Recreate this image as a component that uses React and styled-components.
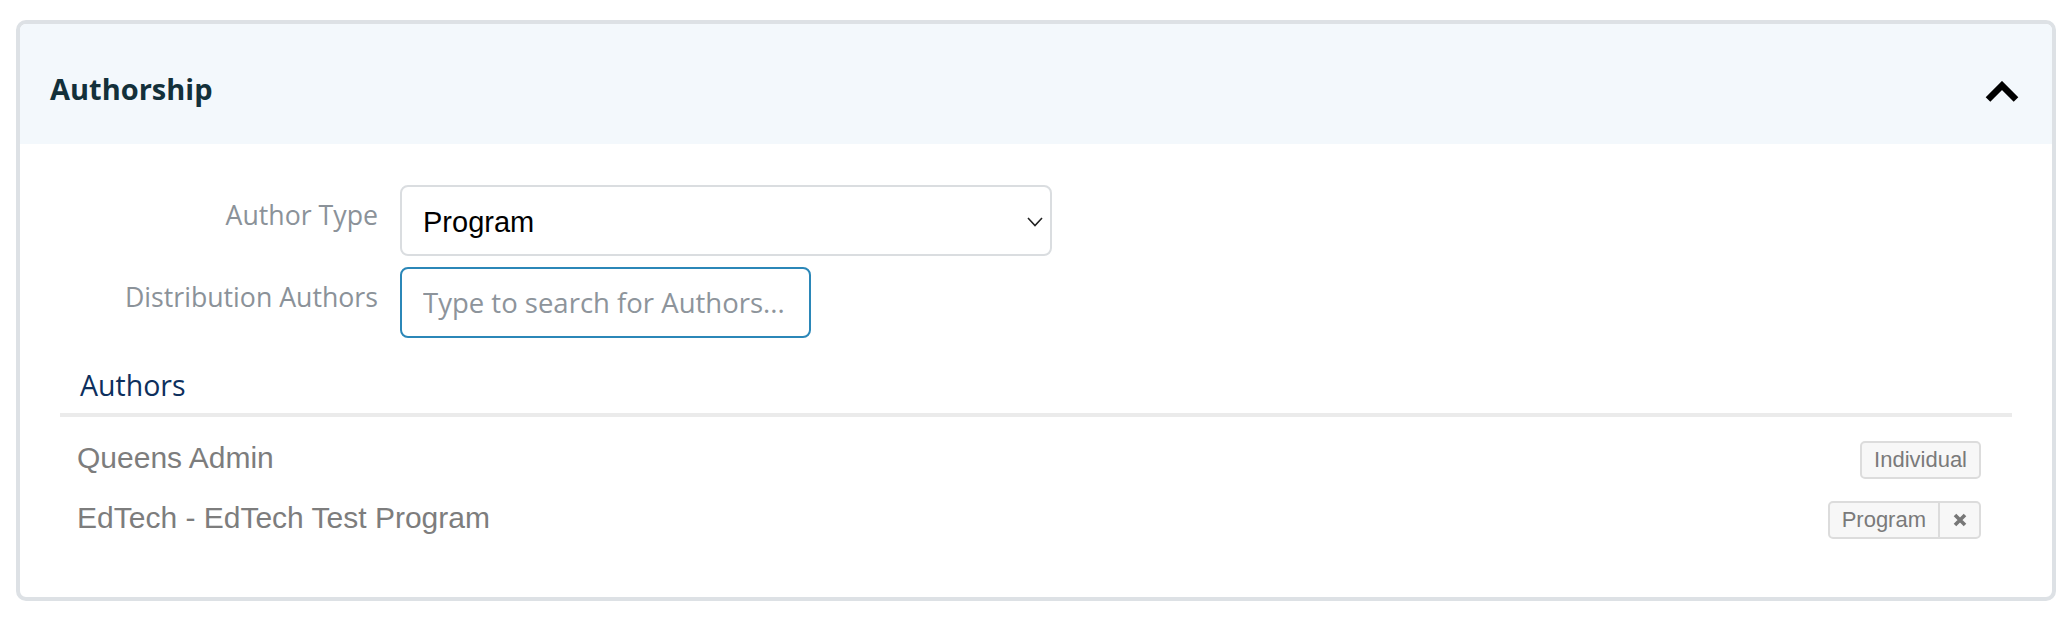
import React from 'react'
import styled, { createGlobalStyle } from 'styled-components'

const GlobalStyle = createGlobalStyle`
  body {
    margin: 0;
    background: #ffffff;
    font-family: "Open Sans", "Noto Sans", sans-serif;
  }
`;

const Page = styled.div`
  padding: 20px 10px 17px 16px;
`;

const Card = styled.section`
  border: 4px solid #dde1e5;
  border-radius: 10px;
  overflow: hidden;
  background: #ffffff;
`;

const Header = styled.header`
  height: 120px;
  box-sizing: border-box;
  padding: 8px 32px 0 30px;
  display: flex;
  align-items: center;
  justify-content: space-between;
  background: #f3f8fc;
`;

const Title = styled.h2`
  margin: 0;
  font-size: 29px;
  font-weight: 700;
  color: #13303a;
`;

const Toggle = styled.button`
  border: 0;
  padding: 0;
  background: none;
  display: flex;
  margin-top: 8px;
  cursor: pointer;
`;

const Body = styled.div`
  padding: 41px 0 49px 0;
`;

const FormRow = styled.div`
  display: flex;
  align-items: flex-start;
  margin-bottom: ${props => props.last ? '0' : '11px'};
`;

const Label = styled.label`
  width: 358px;
  flex-shrink: 0;
  margin-right: 22px;
  padding-top: 12px;
  text-align: right;
  font-size: 26.7px;
  line-height: 35px;
  color: #8b9299;
`;

const SelectWrap = styled.div`
  position: relative;
  width: 652px;
`;

const Select = styled.select`
  appearance: none;
  width: 100%;
  height: 71px;
  box-sizing: border-box;
  padding: 3px 40px 0 21px;
  border: 2px solid #dadde0;
  border-radius: 8px;
  background: #ffffff;
  font-family: "Liberation Sans", Arial, sans-serif;
  font-size: 29px;
  color: #000000;
  outline: none;
`;

const Caret = styled.svg`
  position: absolute;
  right: 9px;
  top: 32px;
  pointer-events: none;
`;

const SearchInput = styled.input`
  width: 411px;
  height: 71px;
  box-sizing: border-box;
  padding: 0 16px 0 21px;
  border: 2px solid #2b87b8;
  border-radius: 8px;
  font-family: "Open Sans", "Noto Sans", sans-serif;
  font-size: 27.5px;
  color: #333;
  outline: none;

  &::placeholder {
    color: #8d949b;
  }
`;

const Authors = styled.div`
  margin: 28px 40px 0 40px;
`;

const AuthorsTitle = styled.h3`
  margin: 0;
  padding: 0 0 9px 20px;
  font-size: 28.5px;
  font-weight: 400;
  line-height: 38px;
  color: #0d2f5d;
  border-bottom: 4px solid #ebebeb;
`;

const List = styled.ul`
  list-style: none;
  margin: 11px 0 0 0;
  padding: 0;
`;

const Item = styled.li`
  height: 60px;
  display: flex;
  align-items: center;
  justify-content: space-between;
  padding: 0 31px 0 17px;
  font-family: "Liberation Sans", Arial, sans-serif;
  font-size: 30px;
  color: #7d7d7d;
`;

const Name = styled.span`
  line-height: 60px;
`;

const BadgeGroup = styled.div`
  display: flex;
  height: 38px;
  box-sizing: border-box;
  margin-top: 3px;
  border: 2px solid #dcdcdc;
  border-radius: 5px;
  background: #f7f7f7;
  font-family: "Liberation Sans", Arial, sans-serif;
  font-size: 22px;
  color: #7a7a7a;
`;

const Badge = styled.span`
  display: flex;
  align-items: center;
  padding: 0 12px;
  border-right: ${props => props.split ? '2px solid #dcdcdc' : '0'};
`;

const Remove = styled.button`
  width: 39px;
  border: 0;
  padding: 0;
  background: none;
  display: flex;
  align-items: center;
  justify-content: center;
  cursor: pointer;
`;

const ChevronUp = () => (
  <svg width="36" height="22" viewBox="0 0 36 22">
    <polyline points="4,18.5 18,4.5 32,18.5" fill="none" stroke="#000" strokeWidth="6.5" strokeLinejoin="miter" />
  </svg>
);

const authors = [
  { name: 'Queens Admin', type: 'Individual', removable: false },
  { name: 'EdTech - EdTech Test Program', type: 'Program', removable: true },
];

const App = () => {
  return (
    <Page>
      <GlobalStyle />
      <Card>
        <Header>
          <Title>Authorship</Title>
          <Toggle aria-label="Collapse">
            <ChevronUp />
          </Toggle>
        </Header>
        <Body>
          <FormRow>
            <Label>Author Type</Label>
            <SelectWrap>
              <Select defaultValue="program">
                <option value="individual">Individual</option>
                <option value="program">Program</option>
              </Select>
              <Caret width="16" height="10" viewBox="0 0 16 10">
                <polyline points="1,1 8,8.5 15,1" fill="none" stroke="#222" strokeWidth="1.6" />
              </Caret>
            </SelectWrap>
          </FormRow>
          <FormRow last>
            <Label>Distribution Authors</Label>
            <SearchInput placeholder="Type to search for Authors..." />
          </FormRow>

          <Authors>
            <AuthorsTitle>Authors</AuthorsTitle>
            <List>
              {authors.map(a => (
                <Item key={a.name}>
                  <Name>{a.name}</Name>
                  <BadgeGroup>
                    <Badge split={a.removable}>{a.type}</Badge>
                    {a.removable && (
                      <Remove aria-label="Remove">
                        <svg width="14" height="14" viewBox="0 0 14 14">
                          <path d="M2 2 L12 12 M12 2 L2 12" stroke="#777" strokeWidth="3.6" />
                        </svg>
                      </Remove>
                    )}
                  </BadgeGroup>
                </Item>
              ))}
            </List>
          </Authors>
        </Body>
      </Card>
    </Page>
  )
}

export default App
